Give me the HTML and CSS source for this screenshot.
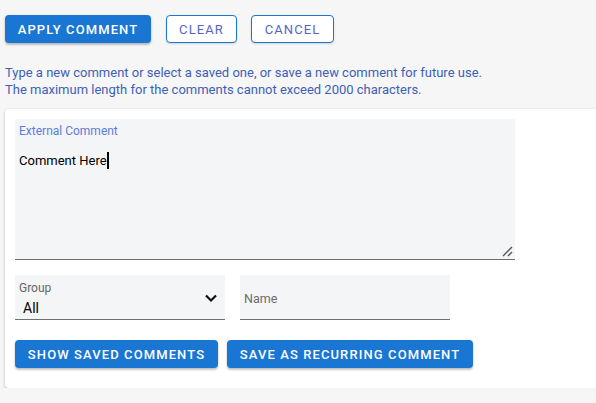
FILE: index.html
```html
<!DOCTYPE html>
<html>
<head>
<meta charset="utf-8">
<link rel="stylesheet" href="styles.css">
</head>
<body>
<div class="page">
  <div class="actions">
    <button class="btn btn-primary btn-apply">APPLY COMMENT</button>
    <button class="btn btn-outline btn-clear">CLEAR</button>
    <button class="btn btn-outline btn-cancel">CANCEL</button>
  </div>
  <p class="hint">Type a new comment or select a saved one, or save a new comment for future use.<br>The maximum length for the comments cannot exceed 2000 characters.</p>
  <div class="card">
    <div class="textarea-field">
      <div class="field-label">External Comment</div>
      <div class="field-value">Comment Here<span class="caret"></span></div>
      <svg class="resize" width="12" height="12" viewBox="0 0 12 12"><path d="M2 11 L11 2 M7 11 L11 7" stroke="#555" stroke-width="1.4" fill="none"/></svg>
    </div>
    <div class="row">
      <div class="select-field">
        <div class="small-label">Group</div>
        <div class="select-value">All</div>
        <svg class="chevron" width="14" height="10" viewBox="0 0 14 10"><path d="M2 2.5 L7 7.5 L12 2.5" stroke="#111" stroke-width="2.2" fill="none"/></svg>
      </div>
      <div class="text-field">
        <span class="placeholder">Name</span>
      </div>
    </div>
    <div class="row buttons">
      <button class="btn btn-primary btn-show">SHOW SAVED COMMENTS</button>
      <button class="btn btn-primary btn-save">SAVE AS RECURRING COMMENT</button>
    </div>
  </div>
</div>
</body>
</html>
```

FILE: styles.css
```css
* { box-sizing: border-box; }
html, body {
  margin: 0;
  padding: 0;
  background: #f6f6f6;
  font-family: Roboto, "Liberation Sans", Arial, sans-serif;
  overflow: hidden;
}
.page {
  padding: 15px 0 0 5px;
}
.actions {
  display: flex;
  gap: 15px;
}
.btn {
  height: 28px;
  border-radius: 4px;
  font-family: Roboto, "Liberation Sans", Arial, sans-serif;
  font-size: 13px;
  font-weight: 500;
  letter-spacing: 1.1px;
  padding: 0;
  cursor: pointer;
}
.btn-primary {
  background: #1976d2;
  color: #fff;
  border: none;
  box-shadow: 0 2px 2px rgba(0,0,0,0.18), 0 1px 3px rgba(0,0,0,0.12);
}
.btn-outline {
  background: #fff;
  color: #5565c7;
  font-weight: 400;
  border: 1px solid #1976d2;
  box-shadow: 0 1px 2px rgba(0,0,0,0.15);
}
.btn-apply { width: 146px; }
.btn-clear { width: 71px; }
.btn-cancel { width: 83px; margin-left: -1px; }
.hint {
  margin: 21px 0 0 0;
  font-size: 13px;
  line-height: 17px;
  color: #3e5fb8;
}
.card {
  margin-top: 11px;
  width: 620px;
  height: 279px;
  background: #fff;
  border-radius: 4px;
  box-shadow: 0 1px 3px rgba(0,0,0,0.25);
  padding: 10px 10px 0 10px;
}
.textarea-field {
  position: relative;
  width: 500px;
  height: 141px;
  background: #f4f5f7;
  border-bottom: 1px solid #6f6f6f;
  padding: 5px 4px 0 4px;
}
.field-label {
  font-size: 12px;
  color: #5b7ddb;
  line-height: 14px;
}
.field-value {
  margin-top: 14px;
  font-size: 13px;
  color: #000;
  line-height: 16px;
  display: flex;
  align-items: center;
}
.caret {
  display: inline-block;
  width: 2px;
  height: 17px;
  background: #000;
}
.resize {
  position: absolute;
  right: 2px;
  bottom: 2px;
}
.row {
  display: flex;
  gap: 15px;
  margin-top: 15px;
}
.select-field {
  position: relative;
  width: 210px;
  height: 45px;
  background: #f4f5f7;
  border-bottom: 1px solid #6f6f6f;
  padding: 6px 4px 0 4px;
}
.small-label {
  font-size: 12px;
  color: #666;
  line-height: 14px;
}
.select-value {
  font-size: 14px;
  color: #000;
  line-height: 16px;
  margin-top: 5px;
  padding-left: 4px;
}
.chevron {
  position: absolute;
  right: 7px;
  top: 18px;
}
.text-field {
  width: 210px;
  height: 45px;
  background: #f4f5f7;
  border-bottom: 1px solid #6f6f6f;
  padding: 0 4px;
  display: flex;
  align-items: center;
}
.placeholder {
  font-size: 12.5px;
  color: #6b6b6b;
  margin-top: 3px;
}
.buttons {
  margin-top: 20px;
  gap: 9px;
}
.btn-show { width: 203px; }
.btn-save { width: 246px; }
```
